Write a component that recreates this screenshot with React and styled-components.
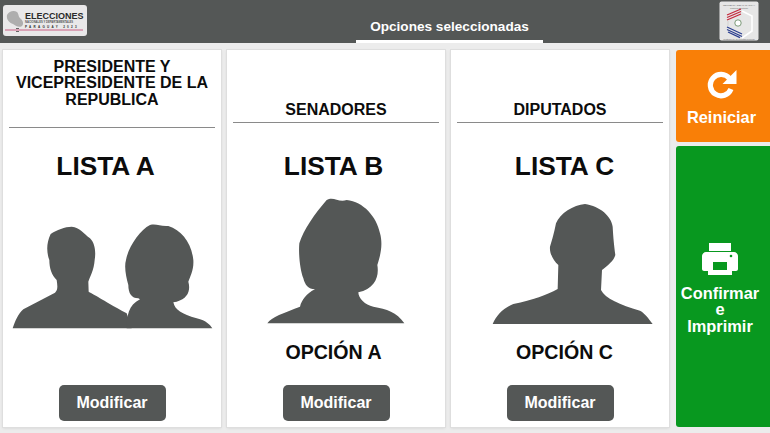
import React from 'react';
import styled, { createGlobalStyle } from 'styled-components';

const GRAPHITE = '#545756';
const GREEN = '#08981f';

const GlobalStyle = createGlobalStyle`
  html, body {
    margin: 0;
    padding: 0;
    background: #ececec;
    font-family: "Liberation Sans", Arial, sans-serif;
  }
  * {
    box-sizing: border-box;
  }
`;

const Page = styled.div`
  width: 770px;
  height: 433px;
  display: flex;
  flex-direction: column;
  overflow: hidden;
`;

const Header = styled.header`
  height: 43px;
  flex: 0 0 43px;
  display: flex;
  align-items: flex-start;
  background: ${GRAPHITE};
  padding-left: 3px;
`;

const ElectionLogo = styled.div`
  width: 84px;
  height: 31px;
  margin-top: 5px;
  padding: 7px 0 0 22px;
  border-radius: 3px;
  background: #e9e8e9;
  position: relative;
  overflow: hidden;
  color: #2a2a2a;
  font-weight: 700;
`;

const MapMark = styled.svg`
  position: absolute;
  left: 2px;
  top: 5px;
  width: 20px;
  height: 25px;
`;

const LogoTitle = styled.div`
  font-size: 9px;
  line-height: 9px;
  white-space: nowrap;
`;

const LogoSmall = styled.div`
  font-size: 2.7px;
  line-height: 4px;
  white-space: nowrap;
  color: #555;
`;

const LogoYear = styled.div`
  font-size: 3px;
  line-height: 4px;
  letter-spacing: 2.3px;
  white-space: nowrap;
`;

const LogoStripe = styled.div`
  position: absolute;
  left: 2px;
  right: 4px;
  bottom: 5px;
  height: 2px;
  background: #d9a3b6;
`;

const Tab = styled.div`
  width: 187px;
  height: 43px;
  margin-left: 269px;
  padding-top: 18px;
  border-bottom: 3px solid #fff;
  color: #fff;
  font-size: 13.6px;
  line-height: 17px;
  font-weight: 700;
  text-align: center;
`;

const CourtLogo = styled.svg`
  width: 40px;
  height: 40px;
  margin: 1px 11px 0 auto;
`;

const Main = styled.main`
  flex: 1;
  display: flex;
  gap: 6px;
  padding: 7px 0 6px 3px;
`;

const Card = styled.section`
  width: 218px;
  display: flex;
  flex-direction: column;
  align-items: center;
  background: #fff;
  box-shadow: 0 0 0 1px #dedede, 0 1px 3px rgba(0, 0, 0, 0.12);
`;

const Head = styled.div`
  width: 100%;
  height: 78px;
  flex: 0 0 78px;
`;

const Title = styled.h2`
  height: ${(p) => (p.$tall ? 78 : 73)}px;
  margin: 0 6px;
  padding: ${(p) => (p.$tall ? '9px 0 0' : '0 0 4px')};
  display: flex;
  align-items: ${(p) => (p.$tall ? 'flex-start' : 'flex-end')};
  justify-content: center;
  border-bottom: 1.5px solid #8a8a8a;
  color: #0c0c0c;
  font-size: 16px;
  line-height: 16.3px;
  font-weight: 700;
  text-align: center;
`;

const ListName = styled.div`
  margin: 24px ${(p) => -p.$shift}px 0 ${(p) => p.$shift}px;
  color: #0c0c0c;
  font-size: 26.3px;
  line-height: 28px;
  font-weight: 700;
`;

const Portrait = styled.svg`
  display: block;
  width: 218px;
  height: 140px;
  margin-top: 10px;
  flex: 0 0 140px;
  fill: ${GRAPHITE};
`;

const OptionName = styled.div`
  margin: 11px ${(p) => -p.$shift}px 0 ${(p) => p.$shift}px;
  color: #0c0c0c;
  font-size: 19.6px;
  line-height: 22px;
  font-weight: 700;
`;

const EditButton = styled.button`
  width: 107px;
  height: 36px;
  margin-top: auto;
  margin-bottom: 6px;
  padding: 0;
  border: 0;
  border-radius: 5px;
  background: ${GRAPHITE};
  color: #fff;
  font-family: inherit;
  font-size: 16px;
  font-weight: 700;
`;

const Side = styled.aside`
  width: 94px;
  margin-left: 1px;
  display: flex;
  flex-direction: column;
  gap: 4px;
`;

const ActionButton = styled.button`
  flex: ${(p) => (p.$grow ? '1' : '0 0 92px')};
  display: flex;
  flex-direction: column;
  align-items: center;
  justify-content: ${(p) => (p.$grow ? 'center' : 'flex-start')};
  padding: ${(p) => (p.$grow ? '4px 6px 0 0' : '20px 3px 0 0')};
  border: 0;
  border-radius: 3px 0 0 3px;
  background: ${(p) => p.$color};
  color: #fff;
  font-family: inherit;
  font-size: 16.4px;
  line-height: 16.5px;
  font-weight: 700;
`;

const ActionIcon = styled.span`
  display: block;
  height: ${(p) => p.$height}px;
  line-height: 0;
`;

const PERSON_LEFT_MAN =
  'M38 355C45 335 55 310 70 298L165 248C175 240 172 225 170 210C155 195 148 175 148 150C140 130 138 100 152 72C170 60 195 50 215 50C240 52 250 70 270 85C285 100 288 125 284 150C282 180 270 200 265 215L266 245C285 255 300 265 380 310L395 355Z';
const PERSON_LEFT_WOMAN =
  'M380 355C380 320 385 285 420 268L415 265C395 265 385 250 385 225C378 200 372 170 378 150C385 110 420 60 450 45C470 40 480 50 505 48C545 60 575 100 580 150C582 180 570 200 565 215C572 240 565 265 530 275L520 277C525 300 545 312 590 325C620 332 630 345 637 355Z';
const PERSON_WOMAN =
  'M82 400C95 380 130 370 180 350C185 330 200 310 225 298C205 298 195 285 190 265C180 240 175 190 178 160C190 120 225 70 260 30C280 18 295 38 320 30C370 35 410 80 420 130C430 165 420 200 412 225C418 260 405 295 355 307C355 325 375 345 400 350C440 358 470 365 493 400Z';
const PERSON_MAN =
  'M68 402C80 375 100 355 130 342C190 330 230 315 263 297L265 225C250 212 238 190 240 170C246 150 252 130 258 100C270 70 310 45 345 42C390 48 425 80 428 110C430 145 432 165 436 195C432 212 412 228 396 240L393 300C405 325 450 345 510 362C525 370 535 385 548 402Z';

const cards = [
  {
    title: <>PRESIDENTE Y<br />VICEPRESIDENTE DE LA<br />REPUBLICA</>,
    tall: true,
    list: 'LISTA A',
    shift: -6.5,
    viewBox: '9 -60 654 420',
    paths: [PERSON_LEFT_MAN, PERSON_LEFT_WOMAN],
  },
  {
    title: 'SENADORES',
    list: 'LISTA B',
    option: 'OPCIÓN A',
    shift: -2.5,
    viewBox: '-39 0 654 420',
    paths: [PERSON_WOMAN],
  },
  {
    title: 'DIPUTADOS',
    list: 'LISTA C',
    option: 'OPCIÓN C',
    shift: 4.5,
    viewBox: '-57 0 654 420',
    paths: [PERSON_MAN],
  },
];

const RestartIcon = () => (
  <svg width="30" height="29" viewBox="0 0 30 29">
    <path d="M22.5 8.5A10.7 10.7 0 1 0 24 19" fill="none" stroke="#fff" strokeWidth="5.2" />
    <path d="M29.5 0V14H15.5Z" fill="#fff" />
  </svg>
);

const PrinterIcon = () => (
  <svg width="36" height="32" viewBox="0 0 36 32">
    <rect x="7" y="0" width="22" height="8" fill="#fff" />
    <path d="M4 9H32C34 9 36 11 36 13V26C36 27 35 28 34 28H30V32H6V28H2C1 28 0 27 0 26V13C0 11 2 9 4 9Z" fill="#fff" />
    <rect x="11" y="19" width="14" height="8" fill={GREEN} />
    <circle cx="29" cy="13" r="1.3" fill={GREEN} />
  </svg>
);

const CourtMark = () => (
  <CourtLogo viewBox="0 0 40 40">
    <rect x="0.5" y="0.5" width="39" height="39" rx="2" fill="#e6e6e6" />
    <text x="20" y="4.5" fontSize="2.4" fill="#666" textAnchor="middle" fontFamily="Liberation Sans">REPÚBLICA DEL PARAGUAY</text>
    <text x="20" y="7.5" fontSize="2.4" fill="#666" textAnchor="middle" fontFamily="Liberation Sans">Justicia Electoral</text>
    <path d="M23 10L33 15V30L23 37" fill="none" stroke="#fff" strokeWidth="1.6" />
    <path d="M8 14L22 8M8 16.5L22 10.5M8 19L22 13" stroke="#c4283c" strokeWidth="1.3" fill="none" />
    <path d="M9 20V25" stroke="#d8d8d8" strokeWidth="1.5" />
    <path d="M8 26L23 33M8 28.5L23 35.5M9 31L21 36.6" stroke="#2c3f90" strokeWidth="1.3" fill="none" />
    <circle cx="19" cy="22" r="3.2" fill="#fff" stroke="#6d8f6a" strokeWidth="0.9" />
    <text x="20" y="39" fontSize="2.2" fill="#666" textAnchor="middle" fontFamily="Liberation Sans">Custodio de la Voluntad Popular</text>
  </CourtLogo>
);

const App = () => (
  <Page>
    <GlobalStyle />
    <Header>
      <ElectionLogo>
        <MapMark viewBox="0 0 20 25">
          <path d="M2 5C4 1 9 0 12 2C14 4 13 7 16 9C18 11 19 14 17 16C14 18 11 16 8 14C5 13 1 10 2 5Z" fill="#aeaeae" />
          <rect x="11" y="18" width="3" height="4" fill="#666" />
        </MapMark>
        <LogoTitle>ELECCIONES</LogoTitle>
        <LogoSmall>NACIONALES Y DEPARTAMENTALES</LogoSmall>
        <LogoYear>PARAGUAY 2023</LogoYear>
        <LogoStripe />
      </ElectionLogo>
      <Tab>Opciones seleccionadas</Tab>
      <CourtMark />
    </Header>
    <Main>
      {cards.map((card) => (
        <Card key={card.list}>
          <Head>
            <Title $tall={card.tall}>
              <span>{card.title}</span>
            </Title>
          </Head>
          <ListName $shift={card.shift}>{card.list}</ListName>
          <Portrait viewBox={card.viewBox}>
            {card.paths.map((d) => <path key={d} d={d} />)}
          </Portrait>
          {card.option && <OptionName $shift={card.shift}>{card.option}</OptionName>}
          <EditButton>Modificar</EditButton>
        </Card>
      ))}
      <Side>
        <ActionButton $color="#f97f07">
          <ActionIcon $height={39}>
            <RestartIcon />
          </ActionIcon>
          Reiniciar
        </ActionButton>
        <ActionButton $grow $color={GREEN}>
          <ActionIcon $height={42}>
            <PrinterIcon />
          </ActionIcon>
          Confirmar
          <br />
          e
          <br />
          Imprimir
        </ActionButton>
      </Side>
    </Main>
  </Page>
);

export default App;
